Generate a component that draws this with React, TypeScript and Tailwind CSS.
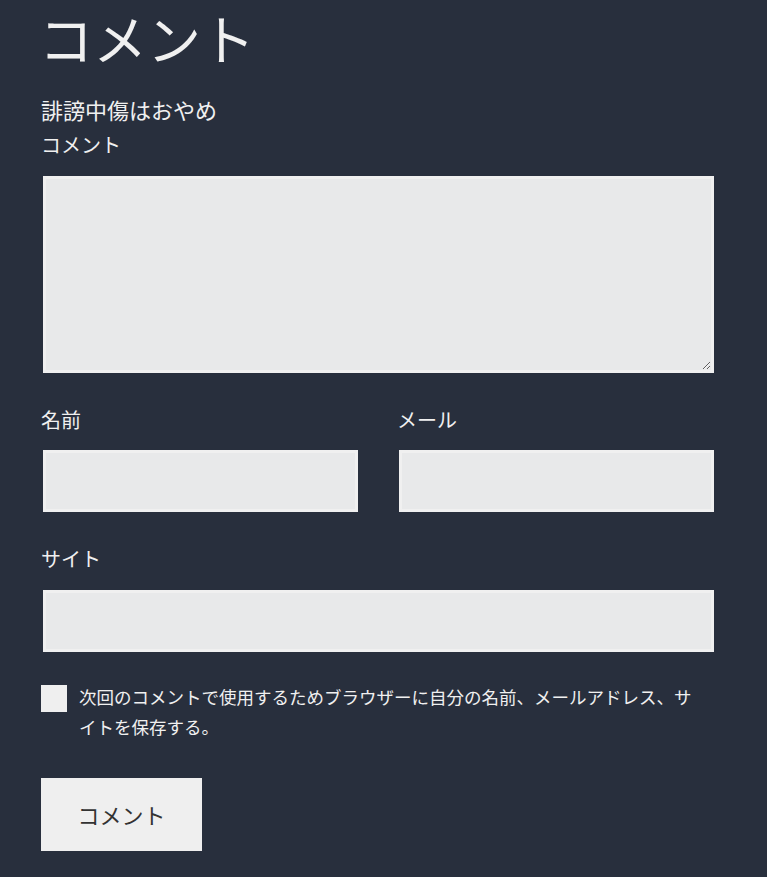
import React, { useState } from 'react';

const font = { fontFamily: '"Noto Sans CJK JP", "Noto Sans", sans-serif' };

const fieldClass =
  'block bg-[#e8e9ea] border-[3px] border-[#f0f0f0] outline-none text-[#333] px-3';

const App: React.FC = () => {
  const [comment, setComment] = useState('');
  const [name, setName] = useState('');
  const [email, setEmail] = useState('');
  const [site, setSite] = useState('');
  const [remember, setRemember] = useState(false);

  return (
    <div className="min-h-[877px] bg-[#282f3d] text-[#f0f0f0]" style={font}>
      <div className="ml-[43px] w-[671px] pt-[8px] pb-[26px]">
        {/* Heading */}
        <h2 className="-ml-[4px] text-[54px] leading-[60px] font-normal">コメント</h2>

        <p className="-ml-[2px] mt-[26px] text-[22px] leading-[30px]">誹謗中傷はおやめ</p>

        {/* Comment */}
        <label className="-ml-[2px] mt-[6px] block text-[20px] leading-[30px]">コメント</label>
        <textarea
          value={comment}
          onChange={(e: React.ChangeEvent<HTMLTextAreaElement>) => setComment(e.target.value)}
          className={`${fieldClass} mt-[16px] w-[671px] h-[197px] py-2`}
        />

        {/* Name / Email */}
        <div className="grid grid-cols-2 gap-x-[41px] mt-[32px]">
          <div>
            <label className="-ml-[2px] block text-[20px] leading-[30px]">名前</label>
            <input
              type="text"
              value={name}
              onChange={(e: React.ChangeEvent<HTMLInputElement>) => setName(e.target.value)}
              className={`${fieldClass} mt-[15px] w-full h-[62px]`}
            />
          </div>
          <div>
            <label className="-ml-[2px] block text-[20px] leading-[30px]">メール</label>
            <input
              type="email"
              value={email}
              onChange={(e: React.ChangeEvent<HTMLInputElement>) => setEmail(e.target.value)}
              className={`${fieldClass} mt-[15px] w-full h-[62px]`}
            />
          </div>
        </div>

        {/* Site */}
        <label className="-ml-[2px] mt-[32px] block text-[20px] leading-[30px]">サイト</label>
        <input
          type="url"
          value={site}
          onChange={(e: React.ChangeEvent<HTMLInputElement>) => setSite(e.target.value)}
          className={`${fieldClass} mt-[16px] w-full h-[62px]`}
        />

        {/* Remember me */}
        <div className="-ml-[2px] mt-[30px] flex items-start gap-[12px]">
          <button
            type="button"
            onClick={() => setRemember(!remember)}
            className="mt-[3px] w-[26px] h-[27px] shrink-0 bg-[#efefef] flex items-center justify-center text-[#333] text-sm"
          >
            {remember ? '✓' : ''}
          </button>
          <span className="w-[622px] text-[17.5px] leading-[30px]">
            次回のコメントで使用するためブラウザーに自分の名前、メールアドレス、サイトを保存する。
          </span>
        </div>

        {/* Submit */}
        <button
          type="submit"
          className="-ml-[2px] mt-[36px] w-[161px] h-[73px] bg-[#efefef] text-[#333] text-[22px]"
        >
          コメント
        </button>
      </div>
    </div>
  );
};

export default App;
